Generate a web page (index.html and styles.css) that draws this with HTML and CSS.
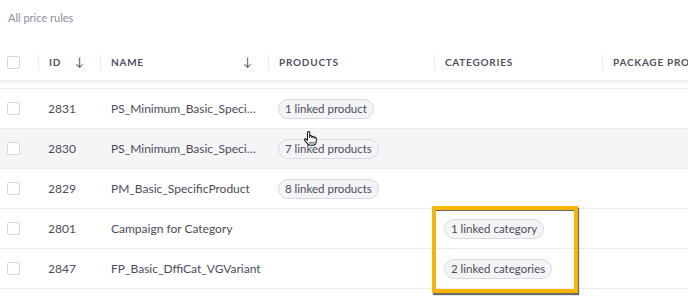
FILE: index.html
```html
<!doctype html>
<html lang="en">
  <head>
    <meta charset="UTF-8" />
    <meta name="viewport" content="width=device-width, initial-scale=1.0" />
    <title>All price rules</title>
    <link rel="stylesheet" href="styles.css">
  </head>
  <body>
    <div class="page">
      <div class="title">All price rules</div>

      <div class="table">
        <div class="head">
          <div class="cell check"><span class="box"></span></div>
          <div class="cell sortable">ID <span class="arrow">&darr;</span></div>
          <div class="cell sortable">NAME <span class="arrow">&darr;</span></div>
          <div class="cell">PRODUCTS</div>
          <div class="cell">CATEGORIES</div>
          <div class="cell clip">PACKAGE PRO</div>
        </div>

        <div class="rows">
          <div class="row">
            <div class="cell check"><span class="box"></span></div>
            <div class="cell">2831</div>
            <div class="cell name">PS_Minimum_Basic_SpecificProduct</div>
            <div class="cell"><span class="pill">1 linked product</span></div>
            <div class="cell"></div>
            <div class="cell"></div>
          </div>
          <div class="row">
            <div class="cell check"><span class="box"></span></div>
            <div class="cell">2830</div>
            <div class="cell name">PS_Minimum_Basic_SpecificVariant</div>
            <div class="cell"><span class="pill">7 linked products</span></div>
            <div class="cell"></div>
            <div class="cell"></div>
          </div>
          <div class="row">
            <div class="cell check"><span class="box"></span></div>
            <div class="cell">2829</div>
            <div class="cell name">PM_Basic_SpecificProduct</div>
            <div class="cell"><span class="pill">8 linked products</span></div>
            <div class="cell"></div>
            <div class="cell"></div>
          </div>
          <div class="row">
            <div class="cell check"><span class="box"></span></div>
            <div class="cell">2801</div>
            <div class="cell name">Campaign for Category</div>
            <div class="cell"></div>
            <div class="cell"><span class="pill">1 linked category</span></div>
            <div class="cell"></div>
          </div>
          <div class="row">
            <div class="cell check"><span class="box"></span></div>
            <div class="cell">2847</div>
            <div class="cell name">FP_Basic_DffiCat_VGVariant</div>
            <div class="cell"></div>
            <div class="cell"><span class="pill">2 linked categories</span></div>
            <div class="cell"></div>
          </div>

          <!-- highlight round the category pills -->
          <div class="highlight"></div>

          <!-- mouse pointer -->
          <svg class="pointer" width="15" height="17" viewBox="0 0 16 17">
            <path d="M5.8 2.2a1.2 1.2 0 0 1 2.4 0V7.5V6.6a1.2 1.2 0 0 1 2.4 0v1.2V7.4a1.2 1.2 0 0 1 2.4 0v.8a1.1 1.1 0 0 1 2.2 0v3.6c0 2.4-1.7 4-4 4H9.4c-1.4 0-2.4-.6-3.2-1.6L2.9 10.6a1.1 1.1 0 0 1 1.7-1.4L5.8 10.4z" fill="#fff" stroke="#111" stroke-width="1.1" stroke-linejoin="round" />
            <path d="M8.6 12v2M10.6 12v2M12.6 12v2" stroke="#111" stroke-width="1" />
          </svg>
        </div>
      </div>
    </div>
  </body>
</html>
```

FILE: styles.css
```css
body {
  font-family: Lato, 'Open Sans', sans-serif;
  margin: 0;
  background: #fff;
  color: #4b4b58;
}
.page {
  width: 688px;
  height: 308px;
  overflow: hidden;
}
.title {
  font-size: 11px;
  color: #8c8c96;
  padding: 11px 8px 0;
  height: 44px;
  box-sizing: border-box;
}
.head,
.row {
  display: grid;
  grid-template-columns: 38px 62px 168px 166px 168px 86px;
  align-items: center;
}
.head {
  height: 36px;
  font-size: 10px;
  font-weight: 700;
  letter-spacing: 0.75px;
  color: #50505e;
  box-shadow: 0 2px 3px rgba(0, 0, 0, 0.06);
  border-bottom: 1px solid #f0f0f3;
}
.head .cell {
  border-left: 1px solid #ececf0;
  height: 16px;
  line-height: 16px;
}
.head .cell.check {
  border-left: none;
}
.cell {
  padding-left: 10px;
  white-space: nowrap;
  box-sizing: border-box;
  min-width: 0;
}
.clip {
  overflow: hidden;
}
.cell.check {
  padding-left: 7px;
  display: flex;
  align-items: center;
}
.sortable {
  display: flex;
  justify-content: space-between;
  padding-right: 16px;
}
.arrow {
  font-size: 12px;
  font-weight: 400;
  letter-spacing: 0;
  color: #50505e;
}
.box {
  display: inline-block;
  width: 11px;
  height: 11px;
  border: 1px solid #d6d6dc;
  border-radius: 2px;
  background: #fff;
}
.rows {
  position: relative;
  margin-top: 7px;
  border-top: 1px solid #ececf0;
}
.row {
  height: 40px;
  border-bottom: 1px solid #ececf0;
  box-sizing: border-box;
  font-size: 12px;
}
.row:nth-child(2) {
  background: #f5f5f8;
}
.name {
  overflow: hidden;
  text-overflow: ellipsis;
  padding-left: 11px;
  padding-right: 6px;
}
.pill {
  display: inline-block;
  height: 20px;
  line-height: 18px;
  box-sizing: border-box;
  padding: 0 6px;
  font-size: 11.5px;
  border: 1px solid #d9d9e1;
  border-radius: 10px;
  background: #f4f4f7;
  color: #4b4b58;
}
.highlight {
  position: absolute;
  left: 432px;
  top: 117px;
  width: 146px;
  height: 87px;
  box-sizing: border-box;
  border: 4px solid #f7b500;
  box-shadow: 1px 2px 1px rgba(70, 70, 70, 0.8), inset 0 1px 0 #666;
}
.pointer {
  position: absolute;
  left: 302px;
  top: 41px;
}
```
